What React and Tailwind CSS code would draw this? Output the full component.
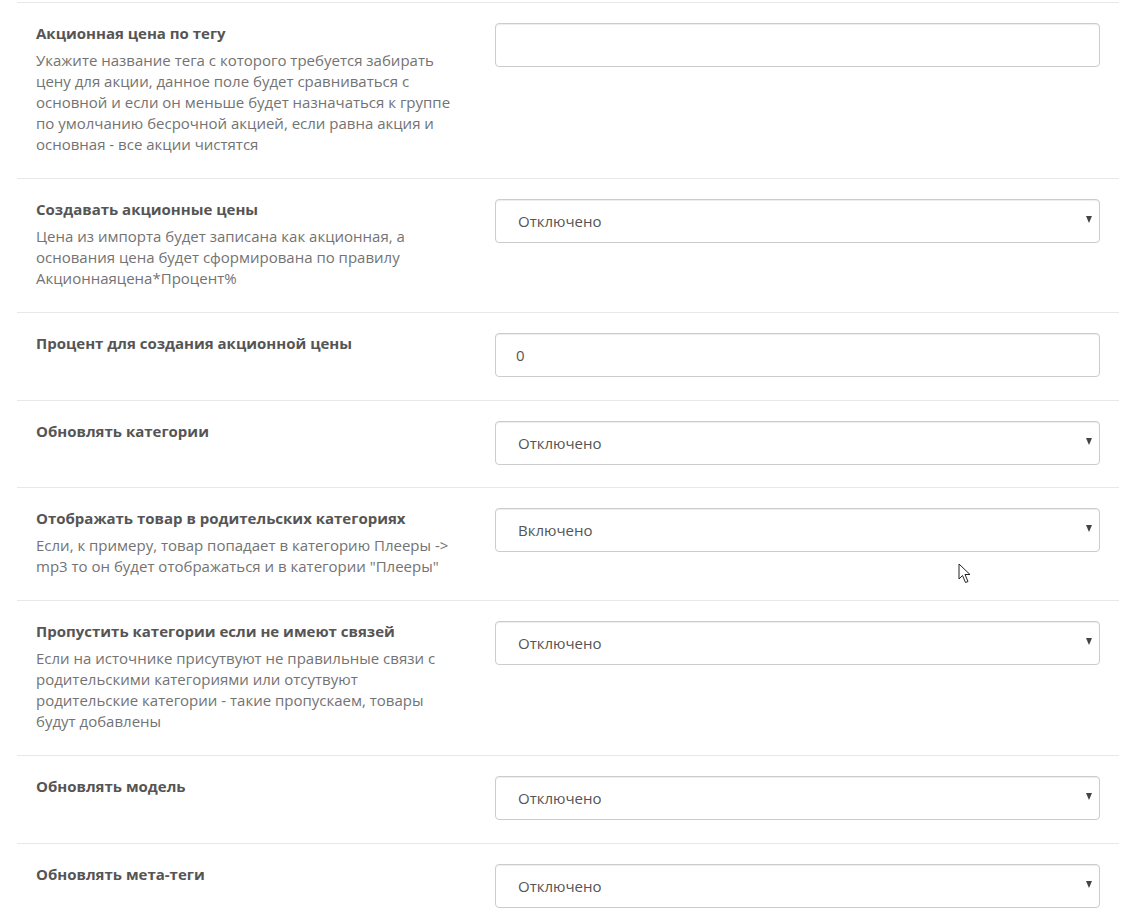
import { useState } from "react";

const rows = [
  {
    label: "Акционная цена по тегу",
    help: "Укажите название тега с которого требуется забирать цену для акции, данное поле будет сравниваться с основной и если он меньше будет назначаться к группе по умолчанию бесрочной акцией, если равна акция и основная - все акции чистятся",
    type: "input",
    value: "",
  },
  {
    label: "Создавать акционные цены",
    help: "Цена из импорта будет записана как акционная, а основания цена будет сформирована по правилу Акционнаяцена*Процент%",
    type: "select",
    value: "0",
  },
  {
    label: "Процент для создания акционной цены",
    type: "input",
    value: "0",
  },
  {
    label: "Обновлять категории",
    type: "select",
    value: "0",
    tight: true,
  },
  {
    label: "Отображать товар в родительских категориях",
    help: 'Если, к примеру, товар попадает в категорию Плееры -> mp3 то он будет отображаться и в категории "Плееры"',
    type: "select",
    value: "1",
  },
  {
    label: "Пропустить категории если не имеют связей",
    help: "Если на источнике присутвуют не правильные связи с родительскими категориями или отсутвуют родительские категории - такие пропускаем, товары будут добавлены",
    type: "select",
    value: "0",
  },
  {
    label: "Обновлять модель",
    type: "select",
    value: "0",
  },
  {
    label: "Обновлять мета-теги",
    type: "select",
    value: "0",
  },
];

const Field = ({ row }) => {
  const [value, setValue] = useState(row.value);

  if (row.type === "input") {
    return (
      <input
        type="text"
        value={value}
        onChange={(e) => setValue(e.target.value)}
        className="w-full h-[44px] border border-[#ccc] rounded-[4px] pl-[20px] pr-3 text-[15px] text-[#555] bg-white outline-none shadow-[inset_0_1px_1px_rgba(0,0,0,0.075)]"
      />
    );
  }

  return (
    <div className="relative">
      <select
        value={value}
        onChange={(e) => setValue(e.target.value)}
        className="appearance-none w-full h-[44px] border border-[#ccc] rounded-[4px] pl-[22px] pr-8 text-[15px] text-[#555] bg-white outline-none shadow-[inset_0_1px_1px_rgba(0,0,0,0.075)]"
      >
        <option value="1">Включено</option>
        <option value="0">Отключено</option>
      </select>
      {/* стрелка селекта */}
      <span className="pointer-events-none absolute right-[8px] top-[17px] w-0 h-0 border-l-[3.5px] border-r-[3.5px] border-t-[7px] border-l-transparent border-r-transparent border-t-[#444]" />
    </div>
  );
};

const App = () => {
  return (
    <div
      className="relative bg-white min-h-[923px] pt-[2px]"
      style={{ fontFamily: '"Open Sans", "Noto Sans", sans-serif' }}
    >
      {rows.map((row, index) => (
        <div
          key={index}
          className={`ml-[17px] mr-[22px] border-t border-[#e8e8e8] flex pt-5 px-[19px] ${row.tight ? "pb-[22px]" : "pb-[23px]"}`}
        >
          <div className="w-[459px] shrink-0 pr-[42px]">
            <div className="text-[15px] leading-[20px] font-bold text-[#555]">
              {row.label}
            </div>
            {row.help && (
              <div className="mt-[7px] text-[15px] leading-[21px] text-[#737373]">
                {row.help}
              </div>
            )}
          </div>
          <div className="flex-1">
            <Field row={row} />
          </div>
        </div>
      ))}

      {/* курсор мыши */}
      <svg
        className="pointer-events-none absolute left-[958px] top-[563px]"
        width="15"
        height="21"
        viewBox="0 0 15 21"
      >
        <path
          d="M1 1 L1 16 L4.5 12.5 L7.5 19.5 L10 18.5 L7 11.5 L12 11.5 Z"
          fill="white"
          stroke="#222"
          strokeWidth="1"
          strokeLinejoin="round"
        />
      </svg>
    </div>
  );
};

export default App;
